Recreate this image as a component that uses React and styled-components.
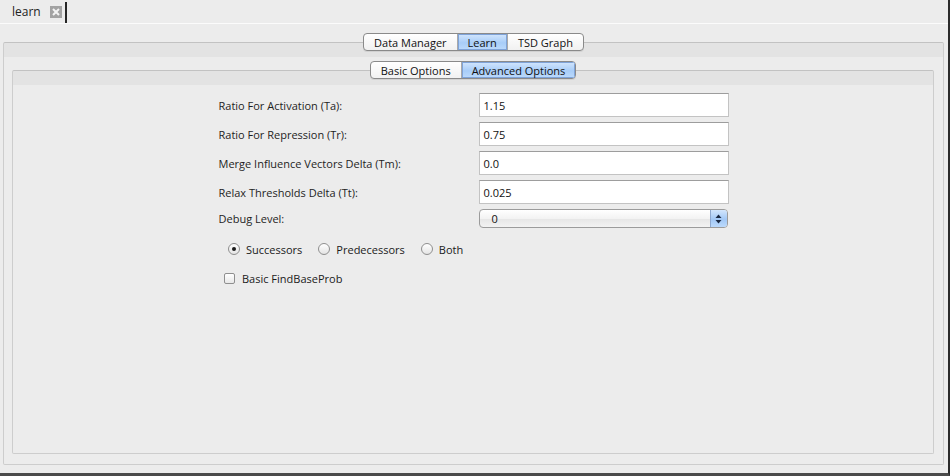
import React from 'react';
import styled, { createGlobalStyle, css } from 'styled-components';

const GlobalStyle = createGlobalStyle`
  body {
    margin: 0;
    background: #ececec;
    font-family: "Lucida Grande", "Open Sans", "DejaVu Sans", sans-serif;
    font-size: 11px;
    color: #1a1a1a;
  }
`;

const App = () => {
  return (
    <>
      <GlobalStyle />
      <WindowStyled>
        <TabBarStyled>
          <DocTabStyled>
            <DocTabLabelStyled>learn</DocTabLabelStyled>
            <CloseBoxStyled>
              <svg width="12" height="12" viewBox="0 0 12 12">
                <rect x="0" y="0" width="12" height="12" fill="#a3a3a3" />
                <path d="M3 3 L9 9 M9 3 L3 9" stroke="#f4f4f4" strokeWidth="2" />
              </svg>
            </CloseBoxStyled>
          </DocTabStyled>
        </TabBarStyled>
        <ContentStyled>
          <TabbedPane
            tabs={['Data Manager', 'Learn', 'TSD Graph']}
            selected={1}
            outer
          >
            <TabbedPane
              tabs={['Basic Options', 'Advanced Options']}
              selected={1}
            >
              <FormStyled>
                <FieldRow label="Ratio For Activation (Ta):" value="1.15" />
                <FieldRow label="Ratio For Repression (Tr):" value="0.75" />
                <FieldRow label="Merge Influence Vectors Delta (Tm):" value="0.0" />
                <FieldRow label="Relax Thresholds Delta (Tt):" value="0.025" />
                <LabelStyled>Debug Level:</LabelStyled>
                <SelectStyled>
                  <SelectValueStyled>0</SelectValueStyled>
                  <SelectArrowsStyled>
                    <svg width="7" height="10" viewBox="0 0 7 10">
                      <path d="M3.5 0.5 L6.5 4 L0.5 4 Z" fill="#1b2a44" />
                      <path d="M3.5 9.5 L6.5 6 L0.5 6 Z" fill="#1b2a44" />
                    </svg>
                  </SelectArrowsStyled>
                </SelectStyled>
              </FormStyled>
              <RadioRowStyled>
                <RadioItem label="Successors" checked />
                <RadioItem label="Predecessors" />
                <RadioItem label="Both" />
              </RadioRowStyled>
              <CheckRowStyled>
                <CheckBoxStyled />
                <span>Basic FindBaseProb</span>
              </CheckRowStyled>
            </TabbedPane>
          </TabbedPane>
        </ContentStyled>
      </WindowStyled>
    </>
  );
};

export default App;

const TabbedPane = ({ tabs, selected, outer, children }) => (
  <PaneWrapStyled outer={outer ? 1 : 0}>
    <SegmentedStyled>
      {tabs.map((t, i) => (
        <SegmentStyled key={t} active={i === selected ? 1 : 0} first={i === 0 ? 1 : 0}>
          {t}
        </SegmentStyled>
      ))}
    </SegmentedStyled>
    <PaneBoxStyled outer={outer ? 1 : 0}>{children}</PaneBoxStyled>
  </PaneWrapStyled>
);

const FieldRow = ({ label, value }) => (
  <>
    <LabelStyled>{label}</LabelStyled>
    <TextFieldStyled>{value}</TextFieldStyled>
  </>
);

const RadioItem = ({ label, checked }) => (
  <RadioItemStyled>
    <RadioCircleStyled checked={checked ? 1 : 0} />
    <span>{label}</span>
  </RadioItemStyled>
);

const WindowStyled = styled.div`
  width: 950px;
  height: 476px;
  box-sizing: border-box;
  border-right: 2px solid #2b2b2b;
  border-bottom: 3px solid #4a4a4a;
  display: flex;
  flex-direction: column;
  background: #ececec;
  overflow: hidden;
`;

const TabBarStyled = styled.div`
  height: 23px;
  display: flex;
  align-items: stretch;
  border-bottom: 1px solid #fbfbfb;
  flex-shrink: 0;
`;

const DocTabStyled = styled.div`
  display: flex;
  align-items: center;
  justify-content: space-between;
  padding: 0 3px 0 12px;
  margin-top: 2px;
  border-right: 2px solid #262626;
  width: 50px;
  font-size: 12px;
`;

const DocTabLabelStyled = styled.span`
  color: #222;
  margin-top: -2px;
`;

const CloseBoxStyled = styled.span`
  display: flex;
  margin-top: -1px;
`;

const ContentStyled = styled.div`
  flex: 1;
  min-height: 0;
  display: flex;
  flex-direction: column;
  padding: 9px 4px 8px 3px;
`;

const PaneWrapStyled = styled.div`
  flex: 1;
  min-height: 0;
  display: flex;
  flex-direction: column;
  align-items: stretch;
  ${(p) =>
    !p.outer &&
    css`
      margin-top: -1px;
    `}
`;

const SegmentedStyled = styled.div`
  align-self: center;
  display: flex;
  height: 18px;
  box-sizing: border-box;
  border: 1px solid #8a8a8a;
  border-radius: 4px;
  overflow: hidden;
  margin-bottom: -9px;
  position: relative;
  z-index: 1;
  background: linear-gradient(#ffffff, #f1f1f1);
  box-shadow: 0 1px 0 rgba(0, 0, 0, 0.08);
`;

const SegmentStyled = styled.div`
  display: flex;
  align-items: center;
  padding: 0 10px;
  color: #111;
  white-space: nowrap;
  ${(p) =>
    !p.first &&
    css`
      border-left: 1px solid #a9a9a9;
    `}
  ${(p) =>
    p.active &&
    css`
      background: linear-gradient(#d3e6fd, #a8cdf8 55%, #bcdafc);
      box-shadow: inset 0 0 0 1px #7fa3d8;
    `}
`;

const PaneBoxStyled = styled.div`
  flex: 1;
  min-height: 0;
  display: flex;
  flex-direction: column;
  box-sizing: border-box;
  border: 1px solid #cdcdcd;
  border-top-color: #c2c2c2;
  border-radius: 2px;
  background: linear-gradient(#e3e3e3 0, #e3e3e3 14px, #ececec 14px);
  ${(p) =>
    p.outer
      ? css`
          padding: 19px 9px 10px 8px;
        `
      : css`
          padding: 22px 0 0 0;
        `}
`;

const FormStyled = styled.div`
  align-self: center;
  display: grid;
  grid-template-columns: 260px 250px;
  row-gap: 5px;
  align-items: center;
  margin-left: 1px;
`;

const LabelStyled = styled.div`
  color: #1e1e1e;
`;

const TextFieldStyled = styled.div`
  height: 24px;
  box-sizing: border-box;
  background: #fff;
  border: 1px solid #c3c3c3;
  border-top-color: #9d9d9d;
  padding: 0 4px;
  display: flex;
  align-items: center;
  color: #111;
`;

const SelectStyled = styled.div`
  height: 19px;
  width: 249px;
  box-sizing: border-box;
  border: 1px solid #9b9b9b;
  border-radius: 4px;
  background: linear-gradient(#ffffff, #f3f3f3 50%, #e6e6e6 51%, #f2f2f2);
  display: flex;
  align-items: center;
  justify-content: space-between;
  overflow: hidden;
`;

const SelectValueStyled = styled.span`
  padding-left: 12px;
  color: #111;
`;

const SelectArrowsStyled = styled.span`
  width: 16px;
  height: 100%;
  display: flex;
  align-items: center;
  justify-content: center;
  border-left: 1px solid #8ea8cf;
  background: linear-gradient(#d3e6fd, #a2c8f6 55%, #bcdafc);
`;

const RadioRowStyled = styled.div`
  display: flex;
  align-items: center;
  gap: 16px;
  margin: 15px 0 0 215px;
  height: 12px;
`;

const RadioItemStyled = styled.div`
  display: flex;
  align-items: center;
  gap: 6px;
`;

const RadioCircleStyled = styled.span`
  width: 12px;
  height: 12px;
  box-sizing: border-box;
  border-radius: 50%;
  border: 1px solid #8f8f8f;
  background: linear-gradient(#ffffff, #e4e4e4);
  display: flex;
  align-items: center;
  justify-content: center;
  &::after {
    content: '';
    width: 4px;
    height: 4px;
    border-radius: 50%;
    background: ${(p) => (p.checked ? '#1c1c1c' : 'transparent')};
  }
`;

const CheckRowStyled = styled.div`
  display: flex;
  align-items: center;
  gap: 7px;
  margin: 17px 0 0 211px;
  height: 12px;
`;

const CheckBoxStyled = styled.span`
  width: 11px;
  height: 11px;
  box-sizing: border-box;
  border: 1px solid #8f8f8f;
  border-radius: 2px;
  background: linear-gradient(#ffffff, #e8e8e8);
`;
